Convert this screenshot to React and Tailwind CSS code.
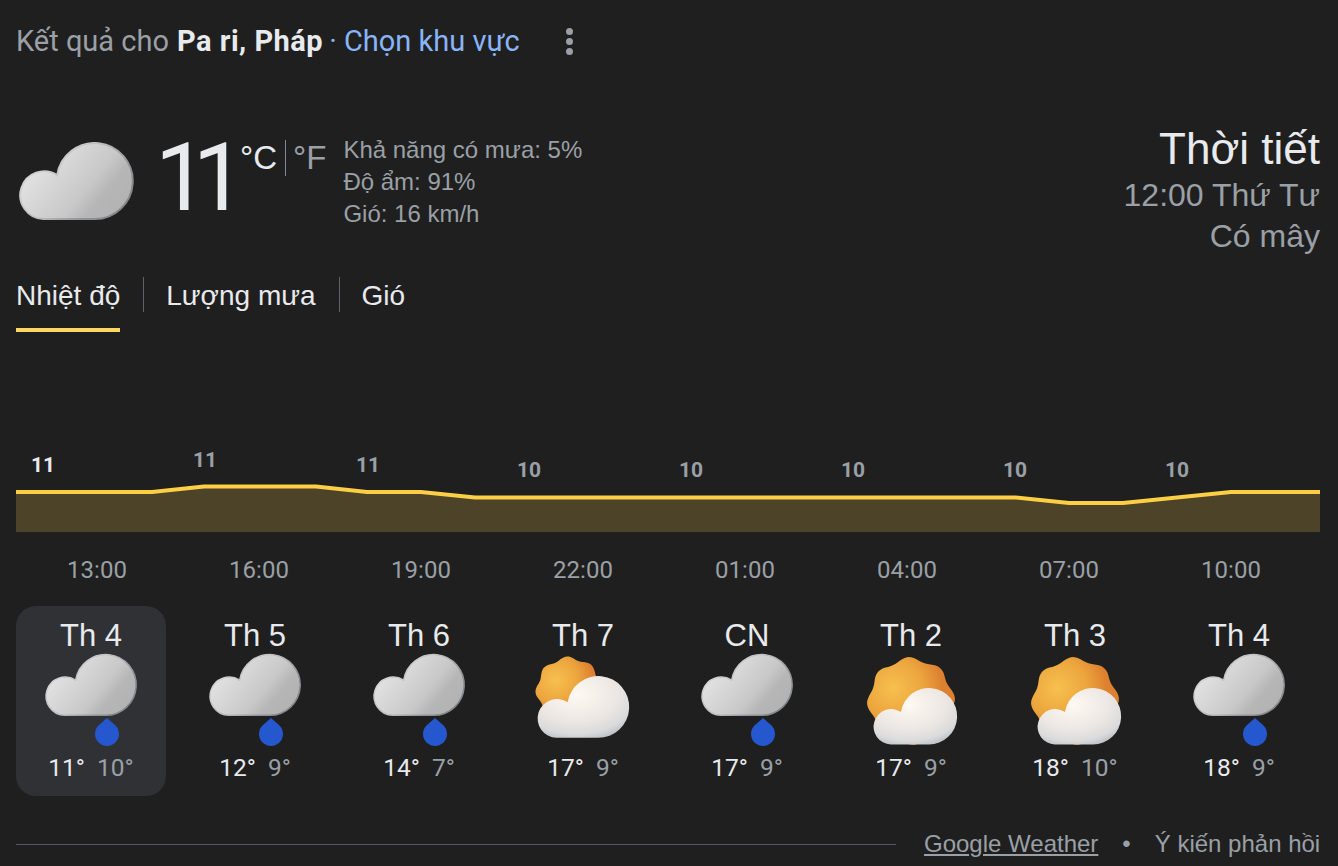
import React from "react";

const days = [
  { name: "Th 4", hi: "11°", lo: "10°", icon: "rain", active: true },
  { name: "Th 5", hi: "12°", lo: "9°", icon: "rain" },
  { name: "Th 6", hi: "14°", lo: "7°", icon: "rain" },
  { name: "Th 7", hi: "17°", lo: "9°", icon: "partly" },
  { name: "CN", hi: "17°", lo: "9°", icon: "rain" },
  { name: "Th 2", hi: "17°", lo: "9°", icon: "sunny" },
  { name: "Th 3", hi: "18°", lo: "10°", icon: "sunny" },
  { name: "Th 4", hi: "18°", lo: "9°", icon: "rain" },
];

const hours = ["13:00", "16:00", "19:00", "22:00", "01:00", "04:00", "07:00", "10:00"];

const labels = [
  [27, 22, "11"],
  [189, 17, "11"],
  [352, 22, "11"],
  [513, 27, "10"],
  [675, 27, "10"],
  [837, 27, "10"],
  [999, 27, "10"],
  [1161, 27, "10"],
];

const CLOUD = "M24.5 78A24.5 24.5 0 1 1 38.7 33A39 39 0 1 1 77 78Z";
const line =
  "0,42 136,42 188,36.5 300,36.5 351,42 405,42 459,47.5 999,47.5 1053,53 1107,53 1215,42 1304,42";

// wobbly outline of the sun
const blob = (cx, cy, r, amp) => {
  let pts = [];
  for (let i = 0; i < 96; i++) {
    const a = (i / 96) * Math.PI * 2;
    const rr = r + amp * Math.cos(a * 8 + 0.5);
    pts.push(`${(cx + rr * Math.cos(a)).toFixed(1)},${(cy + rr * Math.sin(a)).toFixed(1)}`);
  }
  return pts.join(" ");
};

const GrayDefs = () => (
  <defs>
    <linearGradient id="grayFill" x1="0" y1="0.25" x2="1" y2="0.8">
      <stop offset="0" stopColor="#e8e8e8" />
      <stop offset="0.6" stopColor="#c8c8c8" />
      <stop offset="0.75" stopColor="#b6b6b6" />
      <stop offset="1" stopColor="#b2b2b2" />
    </linearGradient>
    <linearGradient id="grayEdge" x1="0" y1="0.2" x2="1" y2="0.8">
      <stop offset="0" stopColor="#dedede" />
      <stop offset="0.45" stopColor="#bcbdbe" />
      <stop offset="0.75" stopColor="#909397" />
      <stop offset="1" stopColor="#808387" />
    </linearGradient>
    <radialGradient id="whiteFill" cx="0.42" cy="0.3" r="0.8">
      <stop offset="0" stopColor="#fff9f4" />
      <stop offset="0.55" stopColor="#ece7e2" />
      <stop offset="0.8" stopColor="#dadbdc" />
      <stop offset="1" stopColor="#b4b8bc" />
    </radialGradient>
    <radialGradient id="sunFill" cx="0.3" cy="0.35" r="0.75">
      <stop offset="0" stopColor="#f6c04e" />
      <stop offset="0.45" stopColor="#eca53e" />
      <stop offset="0.75" stopColor="#dd8030" />
    </radialGradient>
  </defs>
);

const RainIcon = () => (
  <svg width="92" height="92" viewBox="0 0 92 92" className="overflow-visible">
    <g transform="translate(0.5 0.5) scale(0.78)">
      <path d={CLOUD} fill="url(#grayFill)" stroke="url(#grayEdge)" strokeWidth="2" />
    </g>
    <path d="M62 64L69.94 71A12 12 0 1 1 54.06 71Z" fill="#2558cf" />
  </svg>
);

const PartlyIcon = () => (
  <svg width="92" height="92" viewBox="0 0 92 92" className="overflow-visible">
    <polygon points={blob(32, 36, 32, 1.6)} fill="url(#sunFill)" />
    <g transform="translate(0 22) scale(0.793)">
      <path d={CLOUD} fill="url(#whiteFill)" />
    </g>
  </svg>
);

const SunnyIcon = () => (
  <svg width="92" height="92" viewBox="0 0 92 92" className="overflow-visible">
    <polygon points={blob(46, 47, 42, 2)} fill="url(#sunFill)" />
    <g transform="translate(8 34) scale(0.724)">
      <path d={CLOUD} fill="url(#whiteFill)" />
    </g>
  </svg>
);

const DayCard = ({ day }) => (
  <div
    className={`h-[190px] w-[150px] rounded-[20px] flex flex-col items-center ${
      day.active ? "bg-[#303135]" : ""
    }`}
  >
    <div className="mt-[13px] h-[34px] leading-[34px] text-[31px] text-[#e8eaed]">{day.name}</div>
    <div className="mt-[1px] h-[92px]">
      {day.icon === "rain" && <RainIcon />}
      {day.icon === "partly" && <PartlyIcon />}
      {day.icon === "sunny" && <SunnyIcon />}
    </div>
    <div className="mt-[7px] flex gap-[12px] font-['Roboto',sans-serif] text-[24.5px] leading-[30px]">
      <span className="text-[#e8eaed]">{day.hi}</span>
      <span className="text-[#9aa0a6]">{day.lo}</span>
    </div>
  </div>
);

export default function App() {
  return (
    <div className="w-[1338px] h-[866px] overflow-hidden bg-[#1f1f1f] px-4 font-['Liberation_Sans',sans-serif]">
      <svg width="0" height="0" className="absolute">
        <GrayDefs />
      </svg>

      {/* location bar */}
      <div className="h-[82px] pt-[1px] flex items-center font-['Roboto',sans-serif] text-[29px] text-[#9aa0a6]">
        <span>Kết quả cho</span>
        <span className="ml-[8px] font-bold tracking-[0.5px] text-[#e8eaed]">Pa ri, Pháp</span>
        <span className="ml-[6px] text-[#8ab4f8]">· Chọn khu vực</span>
        <div className="ml-[46px] flex flex-col gap-[3px]">
          <span className="w-[7px] h-[7px] rounded-full bg-[#9aa0a6]" />
          <span className="w-[7px] h-[7px] rounded-full bg-[#9aa0a6]" />
          <span className="w-[7px] h-[7px] rounded-full bg-[#9aa0a6]" />
        </div>
      </div>

      {/* current conditions */}
      <div className="h-[186px] flex justify-between">
        <div className="flex">
          <svg width="116" height="78" viewBox="-1 -1 118 80" className="mt-[60px] ml-[2px]">
            <path d={CLOUD} fill="url(#grayFill)" stroke="url(#grayEdge)" strokeWidth="2" />
          </svg>
          <div className="ml-[21px] mt-[41px] h-[110px] w-[72px] font-['Roboto',sans-serif] leading-[110px] text-[94px] tracking-[-15px] text-[#e8eaed]">
            11
          </div>
          <div className="ml-[13px] mt-[56px] flex items-start text-[33px] leading-[40px]">
            <span className="text-[#e8eaed]">°C</span>
            <span className="ml-[8px] mt-[2px] h-[36px] w-px bg-[#80868b]" />
            <span className="ml-[7px] text-[#9aa0a6]">°F</span>
          </div>
          <div className="ml-[17px] mt-[52px] text-[24px] leading-[32px] text-[#9aa0a6]">
            <div>Khả năng có mưa: 5%</div>
            <div>Độ ẩm: 91%</div>
            <div>Gió: 16 km/h</div>
          </div>
        </div>
        <div className="mt-[42px] pr-[2px] text-right text-[32px] leading-[42px] text-[#9aa0a6]">
          <div className="h-[50px] leading-[50px] text-[44px] text-[#e8eaed]">Thời tiết</div>
          <div>12:00 Thứ Tư</div>
          <div className="-mt-[1px]">Có mây</div>
        </div>
      </div>

      {/* tabs */}
      <div className="h-[64px] flex items-start text-[28px] text-[#e8eaed]">
        <div className="h-[64px] leading-[56px] border-b-[4px] border-[#fdd663]">Nhiệt độ</div>
        <span className="ml-[23px] mt-[9px] h-[35px] w-px bg-[#5f6368]" />
        <div className="ml-[22px] leading-[56px]">Lượng mưa</div>
        <span className="ml-[23px] mt-[9px] h-[35px] w-px bg-[#5f6368]" />
        <div className="ml-[22px] leading-[56px]">Gió</div>
      </div>

      {/* chart */}
      <svg width="1304" height="92" viewBox="0 -10 1304 92" className="block mt-[108px]">
        <polygon points={`0,82 ${line} 1304,82`} fill="#4c4328" />
        <polyline points={line} fill="none" stroke="#fccf45" strokeWidth="4" />
        {labels.map(([x, y, t], i) => (
          <text
            key={i}
            x={x}
            y={y}
            textAnchor="middle"
            className={`font-['Roboto',sans-serif] text-[21px] font-bold ${
              i === 0 ? "fill-[#e8eaed]" : "fill-[#9aa0a6]"
            }`}
          >
            {t}
          </text>
        ))}
      </svg>

      {/* hours */}
      <div className="mt-[22px] w-[1296px] grid grid-cols-8 text-center font-['Roboto',sans-serif] text-[24px] leading-[32px] text-[#9aa0a6]">
        {hours.map((h) => (
          <div key={h}>{h}</div>
        ))}
      </div>

      {/* days */}
      <div className="mt-[20px] flex gap-[14px]">
        {days.map((d, i) => (
          <DayCard key={i} day={d} />
        ))}
      </div>

      {/* footer */}
      <div className="mt-[30px] flex items-center text-[24px] text-[#9aa0a6]">
        <div className="w-[880px] h-px bg-[#55585c]" />
        <span className="ml-[28px] underline">Google Weather</span>
        <span className="ml-[24px]">•</span>
        <span className="ml-[24px]">Ý kiến phản hồi</span>
      </div>
    </div>
  );
}
